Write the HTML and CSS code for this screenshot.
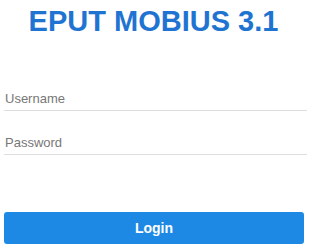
FILE: index.html
```html
<!DOCTYPE html>
<html>
<head>
<meta charset="utf-8">
<link rel="stylesheet" href="styles.css">
</head>
<body>
<div class="page">
  <h1 class="title">EPUT MOBIUS 3.1</h1>
  <form class="form">
    <input class="field" type="text" placeholder="Username">
    <input class="field field-pass" type="password" placeholder="Password">
    <button class="login" type="button">Login</button>
  </form>
</div>
</body>
</html>
```
FILE: styles.css
```css
html, body {
  margin: 0;
  padding: 0;
  background: #ffffff;
}
body {
  font-family: "Liberation Sans", Arial, sans-serif;
}
.page {
  width: 303px;
  padding: 7px 0 0 4px;
}
.title {
  margin: 0;
  padding-right: 4px;
  text-align: center;
  font-size: 29px;
  line-height: 29px;
  font-weight: bold;
  color: #1f74d2;
}
.form {
  display: flex;
  flex-direction: column;
  margin-top: 50px;
}
.field {
  display: block;
  box-sizing: border-box;
  width: 100%;
  height: 25px;
  margin: 0;
  padding: 4px 0 4px 1px;
  border: none;
  border-bottom: 1px solid #dedede;
  outline: none;
  font-family: "Liberation Sans", Arial, sans-serif;
  font-size: 13px;
  line-height: 16px;
  color: #333;
  background: transparent;
}
.field::placeholder {
  color: #777777;
  opacity: 1;
}
.field-pass {
  margin-top: 19px;
}
.login {
  margin-top: 57px;
  width: 300px;
  height: 32px;
  border: none;
  border-radius: 3px;
  background: #1e88e5;
  color: #ffffff;
  font-family: "Liberation Sans", Arial, sans-serif;
  font-size: 14px;
  font-weight: bold;
  padding: 0;
}
```
